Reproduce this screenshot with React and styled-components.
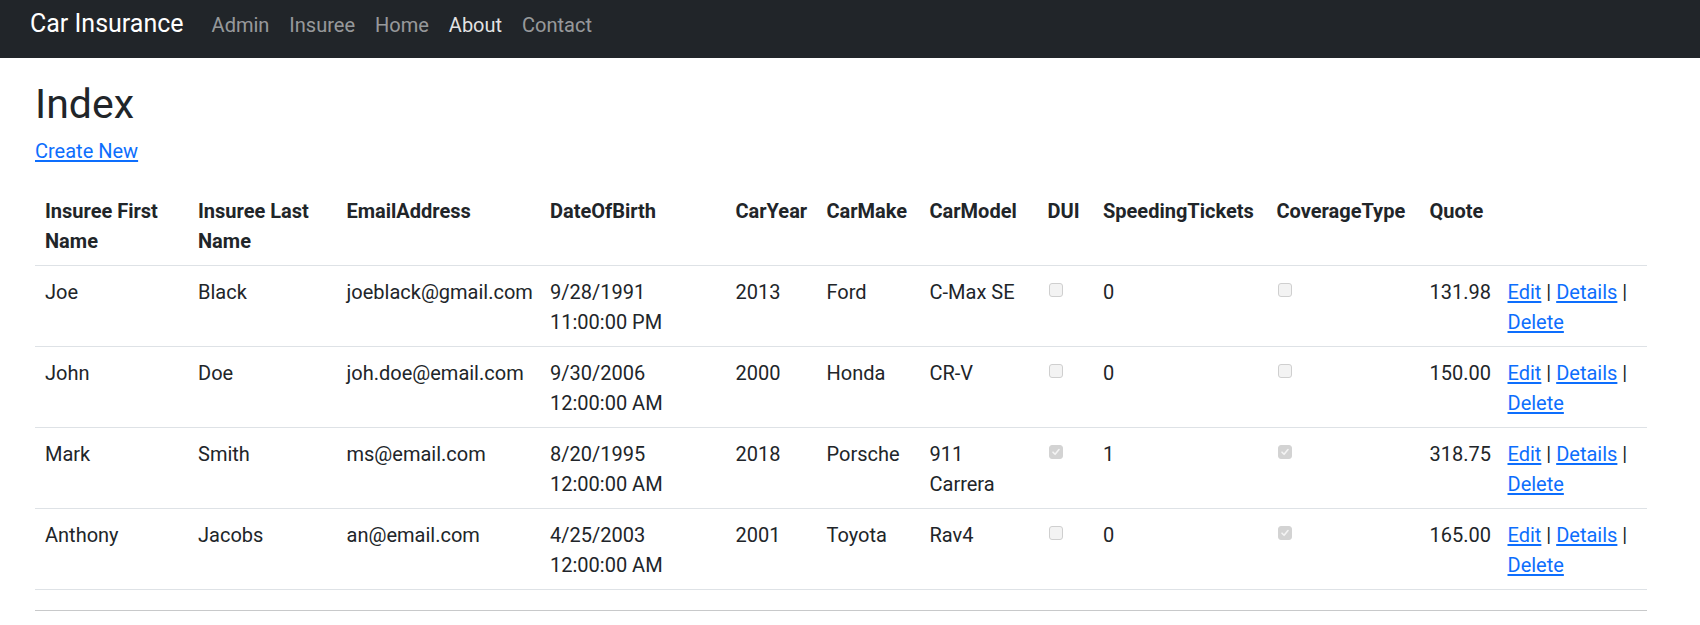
import React from "react";
import styled, { createGlobalStyle } from "styled-components";

const GlobalStyle = createGlobalStyle`
  html, body {
    margin: 0;
    padding: 0;
    background: #ffffff;
  }
  body {
    font-family: Roboto, "Open Sans", "Liberation Sans", sans-serif;
    font-size: 20px;
    line-height: 30px;
    color: #212529;
  }
  *, *::before, *::after { box-sizing: border-box; }
`;

const NavBar = styled.nav`
  height: 58px;
  background: #212529;
  display: flex;
  align-items: flex-start;
  padding: 0 30px;
`;

const Brand = styled.a`
  font-size: 25px;
  line-height: 30px;
  padding-top: 9px;
  margin-right: 18px;
  color: #ffffff;
  text-decoration: none;
  white-space: nowrap;
`;

const NavList = styled.ul`
  display: flex;
  list-style: none;
  margin: 0;
  padding: 0;
`;

const NavLink = styled.a`
  display: block;
  padding: 10px 10px 0;
  font-size: 20px;
  line-height: 30px;
  color: ${(p) => (p.$active ? "rgba(255,255,255,0.88)" : "rgba(255,255,255,0.55)")};
  text-decoration: none;
`;

const Main = styled.main`
  padding: 22px 53px 0 35px;
`;

const Title = styled.h2`
  margin: 0 0 8px;
  font-size: 41px;
  line-height: 48px;
  font-weight: 400;
`;

const Para = styled.p`
  margin: 0 0 19px;
`;

const Link = styled.a`
  color: #0d6efd;
  text-decoration: underline;
  text-underline-offset: 2px;
`;

const Table = styled.table`
  width: 100%;
  table-layout: fixed;
  border-collapse: collapse;
  margin-bottom: 20px;
`;

const Col = styled.col`
  width: ${(p) => p.$w}px;
`;

const HeadCell = styled.th`
  text-align: left;
  vertical-align: top;
  font-weight: 700;
  padding: 11px 10px 9px;
  border-bottom: 1px solid #dee2e6;
`;

const Cell = styled.td`
  vertical-align: top;
  padding: 11px 10px 9px;
  border-bottom: 1px solid #dee2e6;
`;

const Box = styled.span`
  display: inline-block;
  vertical-align: top;
  width: 14px;
  height: 14px;
  margin: 6px 0 0 1px;
  border-radius: 3px;
  border: 1px solid ${(p) => (p.$checked ? "#d3d3d3" : "#cfcfcf")};
  background: ${(p) => (p.$checked ? "#d3d3d3" : "#f3f3f3")};
  position: relative;
`;

const CheckMark = styled.svg`
  position: absolute;
  left: 1px;
  top: 1px;
  width: 10px;
  height: 10px;
`;

const Rule = styled.hr`
  margin: 0;
  border: 0;
  border-top: 1px solid #c8c9ca;
`;

const Checkbox = ({ checked }) => (
  <Box $checked={checked}>
    {checked && (
      <CheckMark viewBox="0 0 10 10">
        <path d="M2 5.2 L4.1 7.3 L8 2.6" fill="none" stroke="#f4f4f4" strokeWidth="1.6" strokeLinecap="round" strokeLinejoin="round" />
      </CheckMark>
    )}
  </Box>
);

const widths = [153, 148.5, 203.5, 185.5, 91, 103, 118, 55.5, 173.5, 153, 78, 149.5];

const headers = [
  "Insuree First Name",
  "Insuree Last Name",
  "EmailAddress",
  "DateOfBirth",
  "CarYear",
  "CarMake",
  "CarModel",
  "DUI",
  "SpeedingTickets",
  "CoverageType",
  "Quote",
  "",
];

const rows = [
  { first: "Joe", last: "Black", email: "joeblack@gmail.com", dob: "9/28/1991 11:00:00 PM", year: 2013, make: "Ford", model: "C-Max SE", dui: false, tickets: 0, coverage: false, quote: "131.98" },
  { first: "John", last: "Doe", email: "joh.doe@email.com", dob: "9/30/2006 12:00:00 AM", year: 2000, make: "Honda", model: "CR-V", dui: false, tickets: 0, coverage: false, quote: "150.00" },
  { first: "Mark", last: "Smith", email: "ms@email.com", dob: "8/20/1995 12:00:00 AM", year: 2018, make: "Porsche", model: "911 Carrera", dui: true, tickets: 1, coverage: true, quote: "318.75" },
  { first: "Anthony", last: "Jacobs", email: "an@email.com", dob: "4/25/2003 12:00:00 AM", year: 2001, make: "Toyota", model: "Rav4", dui: false, tickets: 0, coverage: true, quote: "165.00" },
];

const navItems = [
  { label: "Admin" },
  { label: "Insuree" },
  { label: "Home" },
  { label: "About", active: true },
  { label: "Contact" },
];

export default function App() {
  return (
    <>
      <GlobalStyle />
      <NavBar>
        <Brand href="#">Car Insurance</Brand>
        <NavList>
          {navItems.map((n) => (
            <li key={n.label}>
              <NavLink href="#" $active={n.active}>{n.label}</NavLink>
            </li>
          ))}
        </NavList>
      </NavBar>
      <Main>
        <Title>Index</Title>
        <Para>
          <Link href="#">Create New</Link>
        </Para>
        <Table>
          <colgroup>
            {widths.map((w, i) => (
              <Col key={i} $w={w} />
            ))}
          </colgroup>
          <thead>
            <tr>
              {headers.map((h, i) => (
                <HeadCell key={i}>{h}</HeadCell>
              ))}
            </tr>
          </thead>
          <tbody>
            {rows.map((r) => (
              <tr key={r.email}>
                <Cell>{r.first}</Cell>
                <Cell>{r.last}</Cell>
                <Cell>{r.email}</Cell>
                <Cell>{r.dob}</Cell>
                <Cell>{r.year}</Cell>
                <Cell>{r.make}</Cell>
                <Cell>{r.model}</Cell>
                <Cell><Checkbox checked={r.dui} /></Cell>
                <Cell>{r.tickets}</Cell>
                <Cell><Checkbox checked={r.coverage} /></Cell>
                <Cell>{r.quote}</Cell>
                <Cell>
                  <Link href="#">Edit</Link> | <Link href="#">Details</Link> |{" "}
                  <Link href="#">Delete</Link>
                </Cell>
              </tr>
            ))}
          </tbody>
        </Table>
        <Rule />
      </Main>
    </>
  );
}
